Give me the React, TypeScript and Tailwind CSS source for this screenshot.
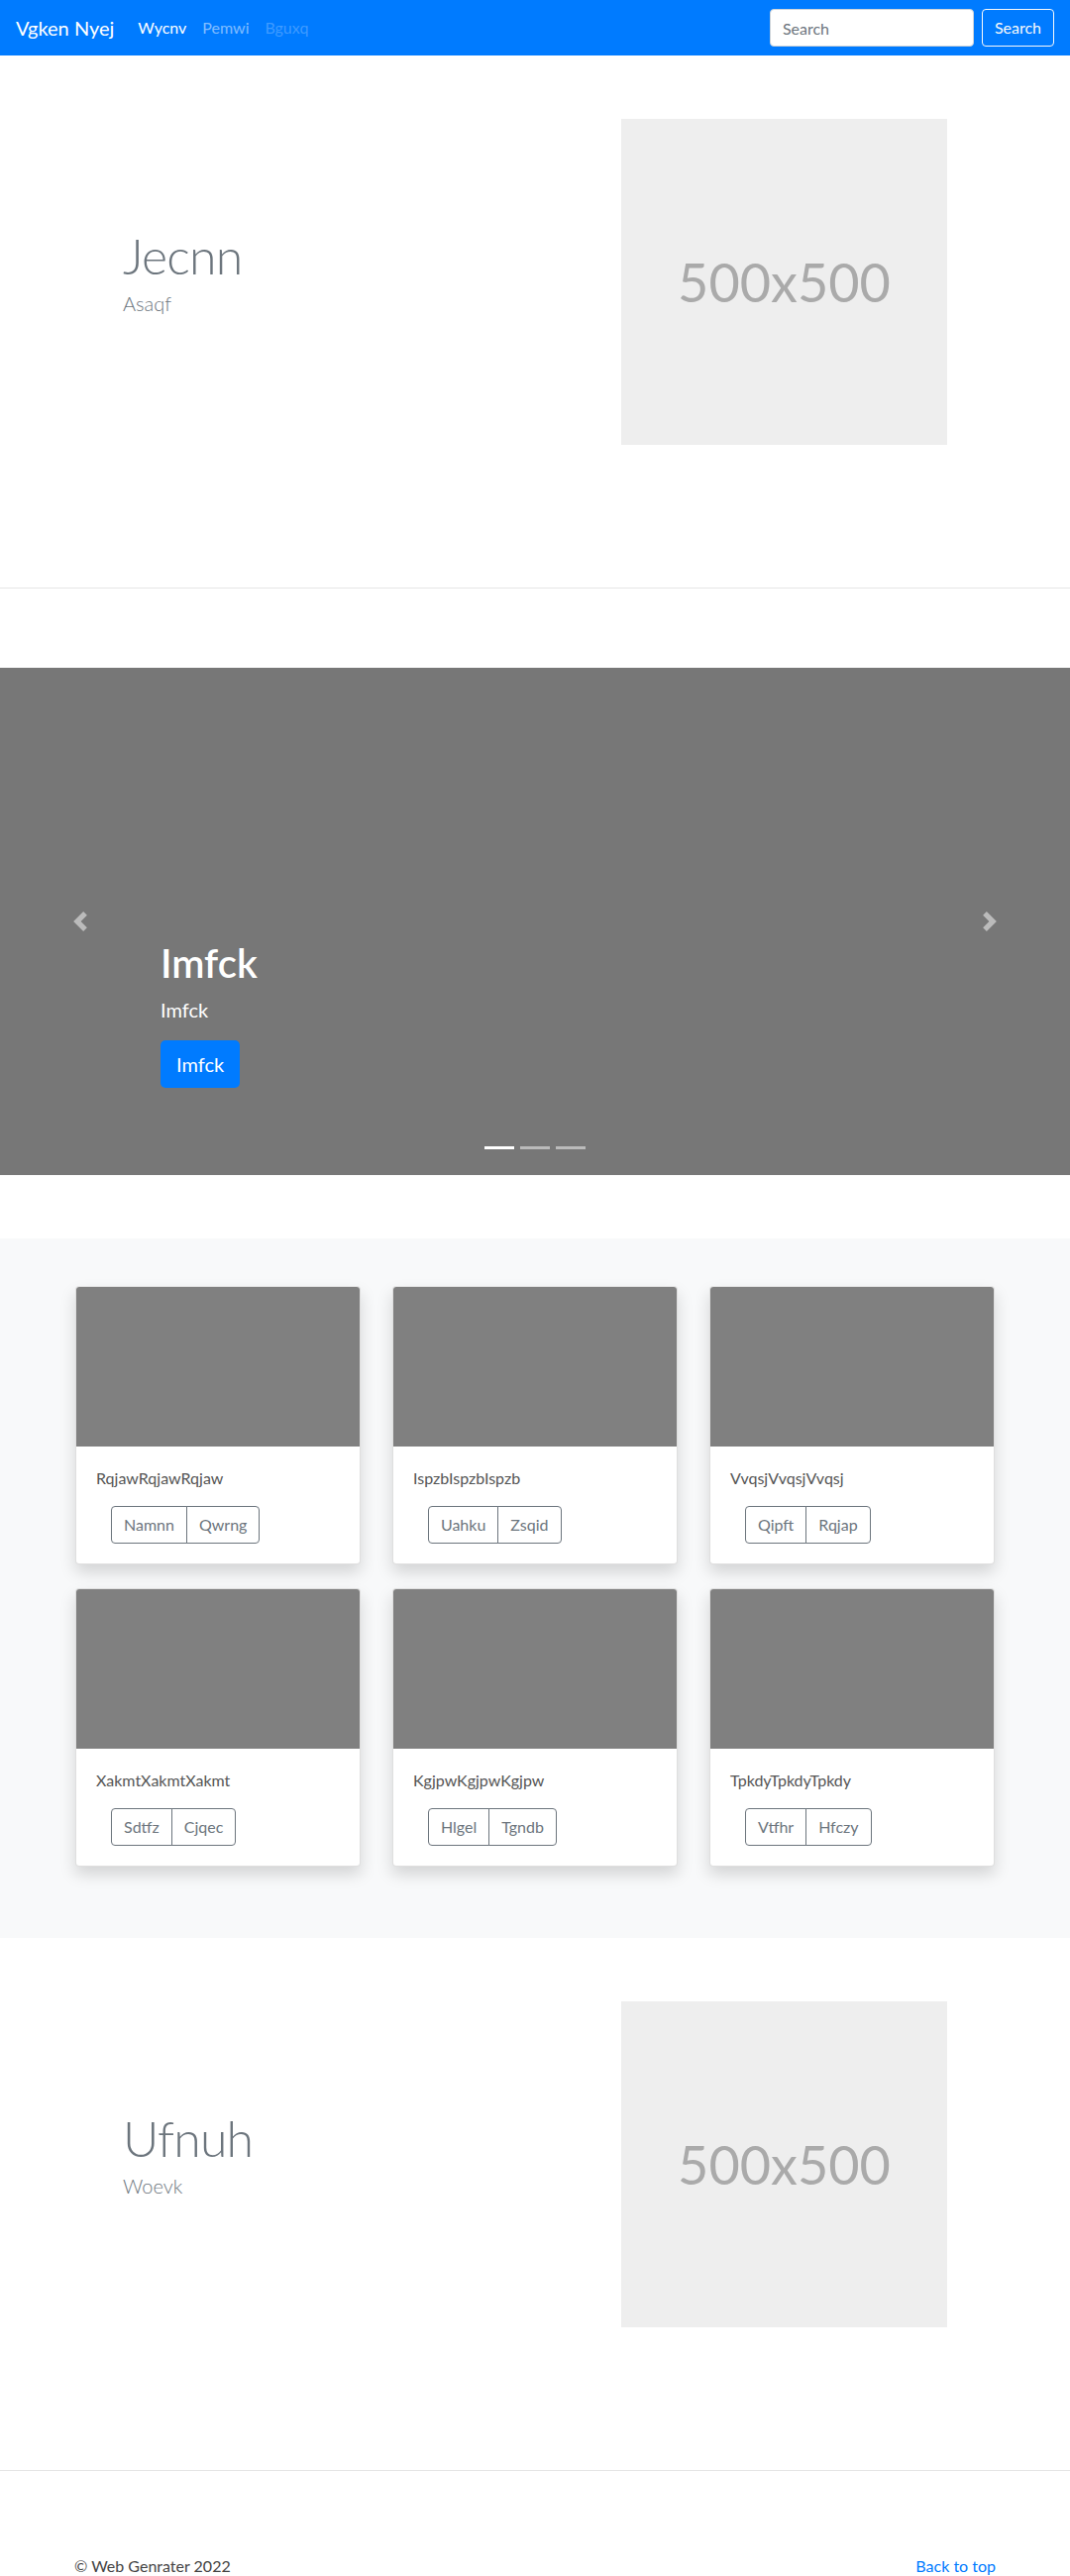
import React from "react";

const cards = [
  { title: "RqjawRqjawRqjaw", a: "Namnn", b: "Qwrng" },
  { title: "IspzbIspzbIspzb", a: "Uahku", b: "Zsqid" },
  { title: "VvqsjVvqsjVvqsj", a: "Qipft", b: "Rqjap" },
  { title: "XakmtXakmtXakmt", a: "Sdtfz", b: "Cjqec" },
  { title: "KgjpwKgjpwKgjpw", a: "Hlgel", b: "Tgndb" },
  { title: "TpkdyTpkdyTpkdy", a: "Vtfhr", b: "Hfczy" },
];

function Navbar() {
  return (
    <nav className="h-14 bg-[#007bff] flex items-center px-4">
      <a className="text-white text-[20px] leading-[30px] mr-4">Vgken Nyej</a>
      <ul className="flex items-center text-[16px] leading-6">
        <li className="px-2 text-white">Wycnv</li>
        <li className="px-2 text-white/50">Pemwi</li>
        <li className="px-2 text-white/25">Bguxq</li>
      </ul>
      <form className="ml-auto flex items-center">
        <input
          placeholder="Search"
          className="w-[206px] h-[38px] rounded bg-white border border-[#ced4da] px-3 text-[16px] placeholder:text-[#6c757d] mr-2 outline-none"
        />
        <button className="h-[38px] px-3 rounded border border-[#f8f9fa] text-[#f8f9fa] text-[16px]">Search</button>
      </form>
    </nav>
  );
}

function Featurette({ title, lead }: { title: string; lead: string }) {
  return (
    <section className="w-[930px] mx-auto flex items-center pt-[64px] pb-[64px]">
      <div className="w-[552px] pl-[49px]">
        <h2 className="text-[50px] leading-none font-light tracking-[-0.8px] text-[#6c757d] mb-2">{title}</h2>
        <p className="text-[20px] leading-[30px] font-light text-[#6c757d] mb-4">{lead}</p>
      </div>
      <div className="w-[329px] h-[329px] bg-[#eeeeee] flex items-center justify-center">
        <span className="text-[54px] text-[#aaaaaa]">500x500</span>
      </div>
    </section>
  );
}

function Chevron({ dir }: { dir: "prev" | "next" }) {
  return (
    <svg width="20" height="20" viewBox="0 0 8 8" fill="#fff">
      {dir === "prev" ? (
        <path d="M5.25 0l-4 4 4 4 1.5-1.5L4.25 4l2.5-2.5L5.25 0z" />
      ) : (
        <path d="M2.75 0l-1.5 1.5L3.75 4l-2.5 2.5L2.75 8l4-4-4-4z" />
      )}
    </svg>
  );
}

function Carousel() {
  return (
    <div className="relative h-[512px] bg-[#777777] mb-16">
      <div className="absolute left-0 top-0 bottom-0 w-[15%] flex items-center justify-center opacity-50">
        <Chevron dir="prev" />
      </div>
      <div className="absolute right-0 top-0 bottom-0 w-[15%] flex items-center justify-center opacity-50">
        <Chevron dir="next" />
      </div>
      <div className="absolute left-[162px] bottom-[88px] text-white">
        <h1 className="text-[40px] leading-[48px] font-semibold mb-2">Imfck</h1>
        <p className="text-[20px] leading-[30px] mb-4">Imfck</p>
        <button className="h-12 px-4 rounded-[5px] bg-[#007bff] text-white text-[20px] leading-[30px]">Imfck</button>
      </div>
      <div className="absolute bottom-[26px] left-0 right-0 flex justify-center gap-[6px]">
        <span className="w-[30px] h-[3px] bg-white" />
        <span className="w-[30px] h-[3px] bg-white/50" />
        <span className="w-[30px] h-[3px] bg-white/50" />
      </div>
    </div>
  );
}

function Album() {
  return (
    <section className="bg-[#f8f9fa] pt-12 pb-[72px]">
      <div className="w-[928px] mx-auto grid grid-cols-3 gap-x-8 gap-y-6">
        {cards.map((c) => (
          <div key={c.title} className="bg-white border border-black/[0.125] rounded shadow-[0_8px_16px_rgba(0,0,0,0.15)]">
            <div className="h-[161px] bg-[#808080] rounded-t-[3px]" />
            <div className="p-5">
              <p className="text-[16px] leading-6 text-[#555555] mb-4">{c.title}</p>
              <div className="flex ml-[15px]">
                <button className="h-[38px] px-3 text-[16px] text-[#6c757d] border border-[#6c757d] rounded-l">{c.a}</button>
                <button className="h-[38px] px-3 -ml-px text-[16px] text-[#6c757d] border border-[#6c757d] rounded-r">{c.b}</button>
              </div>
            </div>
          </div>
        ))}
      </div>
    </section>
  );
}

export default function App() {
  return (
    <div className="font-['Lato',sans-serif] text-[#212529] bg-white min-h-[2600px]">
      <Navbar />
      <main>
        <Featurette title="Jecnn" lead="Asaqf" />
        <hr className="my-20 border-t border-black/10" />
        <Carousel />
        <Album />
        <Featurette title="Ufnuh" lead="Woevk" />
        <hr className="mt-20 border-t border-black/10" />
      </main>
      <footer className="w-[930px] mx-auto mt-[84px] flex justify-between text-[16px] leading-6">
        <p className="text-[#444444]">© Web Genrater 2022</p>
        <a className="text-[#007bff]">Back to top</a>
      </footer>
    </div>
  );
}
